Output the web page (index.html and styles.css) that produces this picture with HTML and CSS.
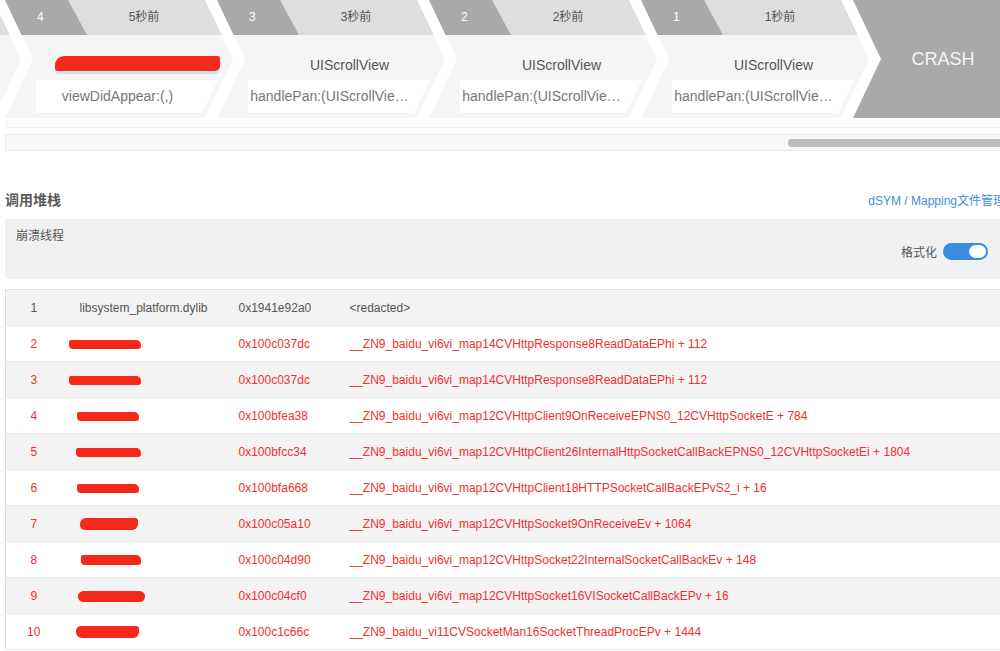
FILE: index.html
```html
<!DOCTYPE html>
<html lang="zh-CN">
<head>
    <meta charset="UTF-8">
    <meta name="viewport" content="width=device-width, initial-scale=1.0">
    <title>崩溃详情</title>
    <link rel="stylesheet" href="styles.css">
</head>
<body>
    <div class="page">
        <div class="steps">
            <div class="step step-prev">
                <div class="step-top"><span class="step-num"></span><span class="step-time"></span></div>
                <div class="step-body"></div>
            </div>
            <div class="step">
                <div class="step-top"><span class="step-num">4</span><span class="step-time">5秒前</span></div>
                <div class="step-body">
                    <div class="step-title"><span class="scribble"></span></div>
                    <div class="step-method">viewDidAppear:(,)</div>
                </div>
            </div>
            <div class="step">
                <div class="step-top"><span class="step-num">3</span><span class="step-time">3秒前</span></div>
                <div class="step-body">
                    <div class="step-title">UIScrollView</div>
                    <div class="step-method">handlePan:(UIScrollVie…</div>
                </div>
            </div>
            <div class="step">
                <div class="step-top"><span class="step-num">2</span><span class="step-time">2秒前</span></div>
                <div class="step-body">
                    <div class="step-title">UIScrollView</div>
                    <div class="step-method">handlePan:(UIScrollVie…</div>
                </div>
            </div>
            <div class="step">
                <div class="step-top"><span class="step-num">1</span><span class="step-time">1秒前</span></div>
                <div class="step-body">
                    <div class="step-title">UIScrollView</div>
                    <div class="step-method">handlePan:(UIScrollVie…</div>
                </div>
            </div>
            <div class="crash">CRASH</div>
        </div>
        <div class="steps-foot"></div>
        <div class="scrollbar"><div class="thumb"></div></div>

        <div class="stack-head">
            <h2>调用堆栈</h2>
            <a href="#" class="dsym-link">dSYM / Mapping文件管理</a>
        </div>

        <div class="thread">
            <div class="thread-name">崩溃线程</div>
            <div class="format">
                <span>格式化</span>
                <span class="switch"><span class="knob"></span></span>
            </div>
        </div>

        <table class="stack">
            <colgroup>
                <col class="col-num">
                <col class="col-lib">
                <col class="col-addr">
                <col>
            </colgroup>
            <tr>
                <td>1</td>
                <td>libsystem_platform.dylib</td>
                <td>0x1941e92a0</td>
                <td>&lt;redacted&gt;</td>
            </tr>
            <tr class="app">
                <td>2</td>
                <td><span class="blob"></span></td>
                <td>0x100c037dc</td>
                <td>__ZN9_baidu_vi6vi_map14CVHttpResponse8ReadDataEPhi + 112</td>
            </tr>
            <tr class="app">
                <td>3</td>
                <td><span class="blob"></span></td>
                <td>0x100c037dc</td>
                <td>__ZN9_baidu_vi6vi_map14CVHttpResponse8ReadDataEPhi + 112</td>
            </tr>
            <tr class="app">
                <td>4</td>
                <td><span class="blob"></span></td>
                <td>0x100bfea38</td>
                <td>__ZN9_baidu_vi6vi_map12CVHttpClient9OnReceiveEPNS0_12CVHttpSocketE + 784</td>
            </tr>
            <tr class="app">
                <td>5</td>
                <td><span class="blob"></span></td>
                <td>0x100bfcc34</td>
                <td>__ZN9_baidu_vi6vi_map12CVHttpClient26InternalHttpSocketCallBackEPNS0_12CVHttpSocketEi + 1804</td>
            </tr>
            <tr class="app">
                <td>6</td>
                <td><span class="blob"></span></td>
                <td>0x100bfa668</td>
                <td>__ZN9_baidu_vi6vi_map12CVHttpClient18HTTPSocketCallBackEPvS2_i + 16</td>
            </tr>
            <tr class="app">
                <td>7</td>
                <td><span class="blob"></span></td>
                <td>0x100c05a10</td>
                <td>__ZN9_baidu_vi6vi_map12CVHttpSocket9OnReceiveEv + 1064</td>
            </tr>
            <tr class="app">
                <td>8</td>
                <td><span class="blob"></span></td>
                <td>0x100c04d90</td>
                <td>__ZN9_baidu_vi6vi_map12CVHttpSocket22InternalSocketCallBackEv + 148</td>
            </tr>
            <tr class="app">
                <td>9</td>
                <td><span class="blob"></span></td>
                <td>0x100c04cf0</td>
                <td>__ZN9_baidu_vi6vi_map12CVHttpSocket16VISocketCallBackEPv + 16</td>
            </tr>
            <tr class="app">
                <td>10</td>
                <td><span class="blob"></span></td>
                <td>0x100c1c66c</td>
                <td>__ZN9_baidu_vi11CVSocketMan16SocketThreadProcEPv + 1444</td>
            </tr>
        </table>
    </div>
</body>
</html>
```

FILE: styles.css
```css
body {
    margin: 0;
    font-family: "Liberation Sans", "Noto Sans CJK SC", sans-serif;
    background-color: #fff;
    color: #555;
    overflow: hidden;
}
.page {
    width: 1000px;
    padding-left: 5px;
}

/* 崩溃前的操作路径 */
.steps {
    display: flex;
    width: 1005px;
    height: 118px;
    margin-left: -5px;
    overflow: hidden;
}
.step {
    flex: 0 0 228px;
    min-width: 0;
    height: 118px;
    margin-right: -16px;
    background-color: #f5f5f5;
    clip-path: polygon(0 0, 200px 0, 228px 59px, 200px 118px, 0 118px, 28px 59px);
}
.step-prev {
    margin-left: -207px;
}
.step-top {
    display: flex;
    height: 35px;
    background-color: #dedede;
    font-size: 12px;
    line-height: 35px;
}
.step-num {
    width: 82px;
    padding-left: 32px;
    box-sizing: border-box;
    background-color: #a9a9a9;
    color: #fff;
    clip-path: polygon(0 0, 63px 0, 82px 35px, 0 35px);
}
.step-time {
    width: 114px;
    text-align: center;
    color: #555;
}
.step-body {
    height: 83px;
    padding-left: 31px;
}
.step-title {
    height: 20px;
    margin-right: 16px;
    padding: 20px 0 0 22px;
    line-height: 20px;
    font-size: 14px;
    text-align: center;
    color: #555;
}
.scribble {
    display: inline-block;
    width: 165px;
    height: 15px;
    margin: 1px -6px 0 -6px;
    vertical-align: top;
    background-color: #f52a1c;
    border-radius: 9px 2px 5px 3px;
    box-shadow: 0 3px 0 #c9e3f5;
}
.step-method {
    width: 182px;
    height: 33px;
    margin-top: 5px;
    padding: 0 20px 0 1px;
    box-sizing: border-box;
    background-color: #fff;
    clip-path: polygon(0 0, 182px 0, 166px 33px, 0 33px);
    font-size: 14px;
    line-height: 33px;
    color: #777;
    text-align: center;
    white-space: nowrap;
    overflow: hidden;
}
.crash {
    flex: 1;
    height: 118px;
    padding-left: 28px;
    background-color: #a9a9a9;
    clip-path: polygon(0 0, 100% 0, 100% 100%, 0 100%, 28px 59px);
    color: #f5f5f5;
    font-size: 18px;
    line-height: 118px;
    text-align: center;
}
.steps-foot {
    height: 7px;
    margin-top: 2px;
    background-color: #fafafa;
    border-bottom: 1px solid #efefef;
}
.scrollbar {
    display: flex;
    justify-content: flex-end;
    align-items: center;
    height: 15px;
    margin-top: 6px;
    background-color: #f8f8f8;
    border: 1px solid #e9e9e9;
}
.thumb {
    width: 216px;
    height: 8px;
    border-radius: 4px;
    background-color: #bdbdbd;
}

/* 调用堆栈 */
.stack-head {
    display: flex;
    justify-content: space-between;
    align-items: center;
    height: 30px;
    margin-top: 33px;
}
.stack-head h2 {
    margin: 0;
    font-size: 14px;
    font-weight: bold;
    color: #595959;
}
.dsym-link {
    font-size: 12px;
    color: #3a8fd8;
    text-decoration: none;
    white-space: nowrap;
}
.thread {
    height: 60px;
    margin-top: 5px;
    padding: 10px 17px 0 11px;
    box-sizing: border-box;
    background-color: #f1f1f1;
    font-size: 12px;
}
.thread-name {
    line-height: 14px;
    color: #555;
}
.format {
    display: flex;
    justify-content: flex-end;
    align-items: center;
    gap: 6px;
    height: 17px;
    color: #555;
}
.switch {
    display: flex;
    justify-content: flex-end;
    align-items: center;
    width: 45px;
    height: 17px;
    padding: 0 2px;
    box-sizing: border-box;
    border-radius: 9px;
    background-color: #3a8ddd;
}
.knob {
    width: 17px;
    height: 13px;
    border-radius: 7px;
    background-color: #fff;
}

.stack {
    width: 1000px;
    margin-top: 10px;
    border-collapse: collapse;
    table-layout: fixed;
    border-top: 1px solid #e3e3e3;
    border-left: 1px solid #dcdcdc;
    border-bottom: 1px solid #dcdcdc;
    font-size: 12px;
}
.col-num {
    width: 56px;
}
.col-lib {
    width: 159px;
}
.col-addr {
    width: 111px;
}
.stack td {
    height: 35px;
    padding: 0 0 0 18px;
    border-bottom: 1px solid #e6e6e6;
    white-space: nowrap;
    color: #555;
}
.stack td:first-child {
    padding: 0;
    text-align: center;
}
.stack tr:nth-child(odd) {
    background-color: #f3f3f3;
}
.stack tr.app td {
    color: #f0302b;
}
.blob {
    display: inline-block;
    width: 72px;
    height: 9px;
    margin-left: -11px;
    vertical-align: middle;
    background-color: #f5281a;
    border-radius: 2px 5px 3px 4px;
}
.stack tr:nth-child(4) .blob,
.stack tr:nth-child(6) .blob {
    width: 62px;
    margin-left: -3px;
}
.stack tr:nth-child(5) .blob {
    width: 65px;
    margin-left: -4px;
}
.stack tr:nth-child(7) .blob {
    width: 58px;
    height: 12px;
    margin-left: 0;
    border-radius: 6px 3px 6px 5px;
}
.stack tr:nth-child(8) .blob {
    width: 60px;
    height: 10px;
    margin-left: 1px;
}
.stack tr:nth-child(9) .blob {
    width: 67px;
    height: 11px;
    margin-left: -2px;
    border-radius: 6px;
}
.stack tr:nth-child(10) .blob {
    width: 63px;
    height: 12px;
    margin-left: -4px;
    border-radius: 5px 3px 6px 6px;
}
```
